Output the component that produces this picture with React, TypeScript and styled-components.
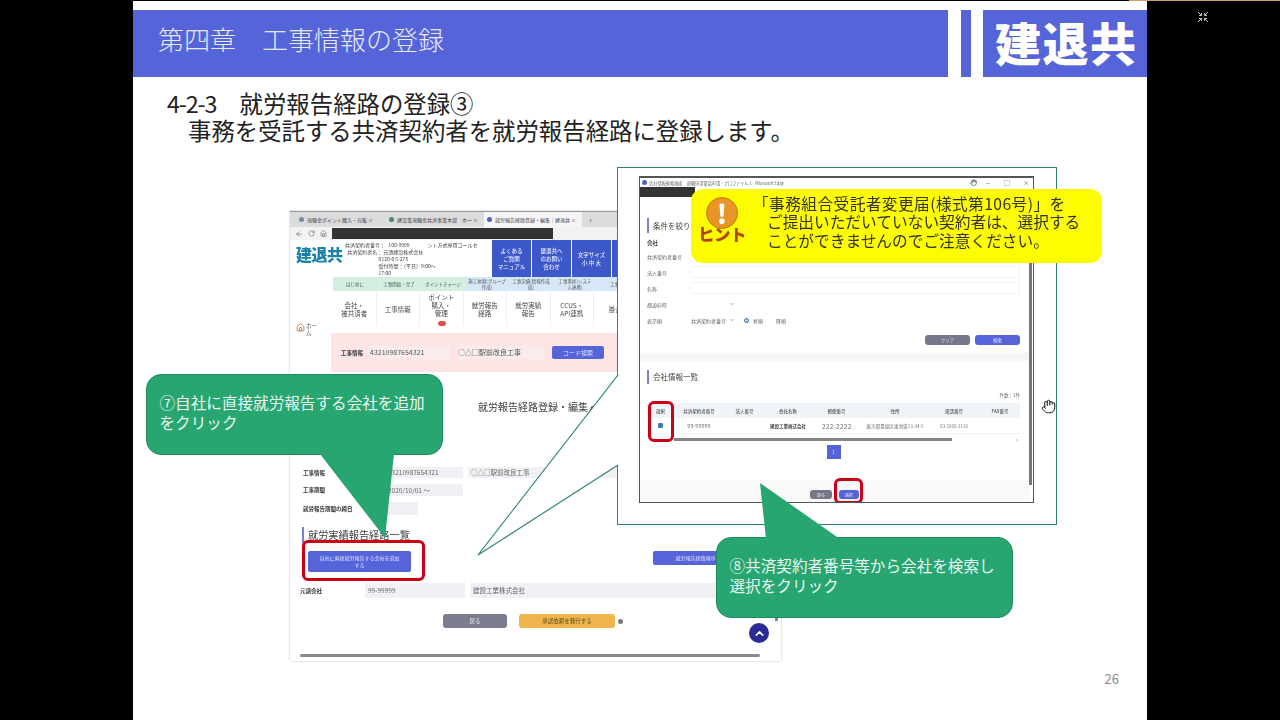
import styled, { createGlobalStyle } from "styled-components";
import { ArrowLeft, ChevronDown, ChevronUp, Hand, Home, RotateCw } from "lucide-react";

const FONT = `"Noto Sans CJK JP", "Noto Sans", sans-serif`;
const BLUE = "#5565d9";
const GREEN = "#27a671";
const LINE = "#2f8573";

const Global = createGlobalStyle`
  * { box-sizing: border-box; }
  html, body { margin: 0; padding: 0; background: #000; }
  body { font-family: ${FONT}; }
`;

const Page = styled.div`
  position: relative;
  width: 1280px;
  height: 720px;
  overflow: hidden;
  background: #000;
  padding: 1px 0 0 133px;
`;

const TopEdge = styled.div`
  position: absolute;
  top: 0;
  right: 0;
  width: 151px;
  height: 1px;
  background: #c8a168;
`;

const ExitIcon = styled.svg`
  position: absolute;
  left: 1197px;
  top: 11px;
  width: 12px;
  height: 12px;
`;

const Slide = styled.div`
  position: relative;
  width: 1014px;
  height: 719px;
  background: #fff;
  padding-top: 9px;
`;

const Header = styled.header`
  display: flex;
  height: 67px;
`;

const TitleBar = styled.div`
  width: 815px;
  display: flex;
  align-items: center;
  padding: 0 0 10px 25px;
  background: ${BLUE};
  color: #e6e9fb;
  font-size: 26px;
  font-weight: 300;
  white-space: pre;
`;

const Stripe = styled.div`
  width: 10px;
  margin-left: 13px;
  background: ${BLUE};
`;

const LogoBar = styled.div`
  flex: 1;
  margin-left: 12px;
  display: flex;
  align-items: center;
  padding: 0 0 5px 12px;
  background: ${BLUE};
  color: #fff;
  font-size: 46px;
  font-weight: 900;
  line-height: 1;
  letter-spacing: 1.5px;
`;

const Heading = styled.div`
  margin: 13px 0 0 34px;
  color: #222;
  font-size: 23.4px;
  line-height: 27px;
  white-space: pre;
`;

const HeadNum = styled.span`
  letter-spacing: -1.2px;
`;

const HeadingSub = styled.div`
  padding-left: 21px;
`;

/* --- background screenshot --- */

const Shot = styled.div`
  position: absolute;
  left: 157px;
  top: 210px;
  width: 491px;
  height: 450px;
  background: #fff;
  box-shadow: 0 0 2px #bbb;
  overflow: hidden;
  color: #444;
  filter: blur(0.4px);
`;

const TabStrip = styled.div`
  display: flex;
  align-items: center;
  height: 16px;
  padding-left: 6px;
  gap: 6px;
  background: #dcdcdc;
  font-size: 5px;
  white-space: nowrap;
  border-top: 1px solid #999;
`;

const Tab = styled.div<{ $active?: boolean; $w: number }>`
  width: ${(p) => p.$w}px;
  height: 100%;
  display: flex;
  align-items: center;
  gap: 3px;
  padding: 0 3px;
  background: ${(p) => (p.$active ? "#f5f5f5" : "transparent")};
`;

const Favicon = styled.span<{ $c: string }>`
  flex: none;
  width: 5px;
  height: 5px;
  border-radius: 50%;
  background: ${(p) => p.$c};
`;

const AddressRow = styled.div`
  display: flex;
  align-items: center;
  height: 13px;
  padding-left: 5px;
  gap: 5px;
  color: #666;
  background: #f2f2f2;
`;

const AddressMask = styled.div`
  width: 221px;
  height: 11px;
  background: #333;
`;

const SiteHeader = styled.div`
  display: flex;
  height: 37px;
`;

const SiteLogo = styled.div`
  width: 55px;
  padding: 2px 0 0 6px;
  color: #1b81a6;
  font-size: 16px;
  line-height: 24px;
  font-weight: 900;
  letter-spacing: -0.5px;
  white-space: nowrap;
`;

const SiteInfo = styled.div`
  width: 147px;
  padding-top: 1px;
  font-size: 5px;
  line-height: 7px;
  white-space: pre;
`;

const SiteButton = styled.div<{ $w: number }>`
  width: ${(p) => p.$w}px;
  margin-right: 1px;
  display: flex;
  align-items: center;
  justify-content: center;
  text-align: center;
  padding: 1px;
  background: #3d58c9;
  color: #e9ecff;
  font-size: 5.5px;
  line-height: 8px;
  font-weight: 500;
`;

const TopGrid = styled.div`
  display: grid;
  grid-template-columns: 41px 1fr;
  height: 95px;
`;

const Sidebar = styled.div`
  display: flex;
  align-items: flex-start;
  gap: 1px;
  padding: 46px 0 0 6px;
  color: #555;
  font-size: 5.5px;
  line-height: 7px;
`;

const SubNav = styled.div`
  display: flex;
  height: 14px;
  margin-left: 2px;
`;

const SubNavItem = styled.div<{ $c: string }>`
  flex: none;
  width: 44px;
  display: flex;
  align-items: center;
  justify-content: center;
  text-align: center;
  background: ${(p) => p.$c};
  color: #555;
  font-size: 4.5px;
  line-height: 6px;
  white-space: pre;
`;

const Menu = styled.div`
  display: flex;
  height: 34px;
  margin: 1px 0 0 2px;
`;

const MenuItem = styled.div`
  position: relative;
  flex: none;
  width: 43.5px;
  display: flex;
  align-items: center;
  justify-content: center;
  text-align: center;
  border-right: 1px solid #eee;
  color: #444;
  font-size: 6.5px;
  line-height: 8px;
  white-space: pre;
`;

const Badge = styled.span`
  position: absolute;
  left: 18px;
  bottom: 0;
  width: 8px;
  height: 5px;
  border-radius: 3px;
  background: #e05050;
`;

const PinkBand = styled.div`
  display: flex;
  align-items: center;
  height: 39px;
  margin-top: 7px;
  padding-left: 10px;
  background: #fde5e6;
  color: #555;
  font-size: 7px;
  white-space: nowrap;
`;

const PinkLabel = styled.span`
  width: 29px;
  font-size: 5.5px;
  font-weight: 700;
  color: #333;
`;

const PinkValue = styled.span<{ $w: number }>`
  width: ${(p) => p.$w}px;
  height: 13px;
  line-height: 13px;
  margin-right: 8px;
  background: #f8ecec;
`;

const BlueButton = styled.div<{ $w: number; $h: number; $r?: number; $size?: number }>`
  flex: none;
  width: ${(p) => p.$w}px;
  height: ${(p) => p.$h}px;
  border-radius: ${(p) => p.$r ?? 2}px;
  display: flex;
  align-items: center;
  justify-content: center;
  text-align: center;
  background: ${BLUE};
  color: #dfe3ff;
  font-size: ${(p) => p.$size ?? 5}px;
  line-height: 1.3;
`;

const ShotTitle = styled.div`
  margin-top: 28px;
  height: 14px;
  padding-left: 188px;
  color: #444;
  font-size: 10px;
  line-height: 14px;
  white-space: nowrap;
`;

const HelpGlyph = styled.span`
  font-size: 6px;
`;

const FieldList = styled.div`
  margin-top: 53px;
  display: flex;
  flex-direction: column;
  gap: 6px;
  padding-left: 13px;
`;

const FieldRow = styled.div`
  display: flex;
  align-items: center;
  gap: 5px;
`;

const FieldLabel = styled.div<{ $w?: number }>`
  flex: none;
  width: ${(p) => p.$w ?? 77}px;
  color: #333;
  font-size: 5.5px;
  font-weight: 700;
  white-space: nowrap;
`;

const FieldBox = styled.div<{ $w: number; $h: number }>`
  flex: none;
  width: ${(p) => p.$w}px;
  height: ${(p) => p.$h}px;
  padding-left: 3px;
  line-height: ${(p) => p.$h}px;
  background: #eff1f5;
  color: #666;
  font-size: 6.5px;
  white-space: nowrap;
`;

const SectionTitle = styled.div<{ $mt: number; $size: number; $h: number }>`
  margin-top: ${(p) => p.$mt}px;
  height: ${(p) => p.$h}px;
  line-height: ${(p) => p.$h}px;
  padding-left: 4px;
  border-left: 2px solid #7a80d0;
  color: #444;
  font-size: ${(p) => p.$size}px;
  white-space: nowrap;
`;

const ShotSection = styled.div`
  margin-left: 12px;
`;

const ActionRow = styled.div`
  display: flex;
  justify-content: space-between;
  align-items: flex-start;
  height: 21px;
  margin-top: 8px;
  padding-left: 18px;
`;

const ActionRight = styled.div`
  width: 128px;
`;

const ContractorRow = styled.div`
  display: flex;
  align-items: center;
  gap: 5px;
  margin-top: 11px;
  padding-left: 10px;
`;

const BottomRow = styled.div`
  display: flex;
  align-items: center;
  height: 14px;
  margin-top: 16px;
  padding-left: 153px;
  gap: 12px;
`;

const PlainButton = styled.div<{ $bg: string; $fg: string; $w: number; $h: number; $size?: number }>`
  flex: none;
  width: ${(p) => p.$w}px;
  height: ${(p) => p.$h}px;
  border-radius: 3px;
  display: flex;
  align-items: center;
  justify-content: center;
  background: ${(p) => p.$bg};
  color: ${(p) => p.$fg};
  font-size: ${(p) => p.$size ?? 5.5}px;
`;

const HelpDot = styled.span`
  width: 5px;
  height: 5px;
  margin-left: -9px;
  border-radius: 50%;
  background: #777;
`;

const ScrollRow = styled.div`
  display: flex;
  align-items: center;
  margin-top: 25px;
  height: 4px;
  padding: 0 21px 0 10px;
`;

const ScrollThumb = styled.div`
  flex: 1;
  height: 3px;
  border-radius: 2px;
  background: #8a8a8a;
`;

const ToTop = styled.div`
  position: absolute;
  left: 459px;
  top: 412px;
  width: 20px;
  height: 20px;
  border-radius: 50%;
  display: flex;
  align-items: center;
  justify-content: center;
  background: #2b2a96;
  color: #fff;
`;

const ScrollNub = styled.div`
  position: absolute;
  left: 485px;
  top: 403px;
  width: 3px;
  height: 7px;
  background: #888;
`;

const RedBox = styled.div<{ $x: number; $y: number; $w: number; $h: number; $b: number }>`
  position: absolute;
  left: ${(p) => p.$x}px;
  top: ${(p) => p.$y}px;
  width: ${(p) => p.$w}px;
  height: ${(p) => p.$h}px;
  border: ${(p) => p.$b}px solid #c90016;
  border-radius: 6px;
`;

/* --- enlarged popup --- */

const Frame = styled.div`
  position: absolute;
  left: 484px;
  top: 166px;
  width: 440px;
  height: 358px;
  padding: 8px 22px 0 21px;
  background: #fff;
  border: 1.5px solid ${LINE};
`;

const Win = styled.div`
  position: relative;
  width: 395px;
  height: 327px;
  display: flex;
  flex-direction: column;
  overflow: hidden;
  border: 1px solid #555;
  border-top-width: 2px;
  background: #fff;
  color: #555;
  filter: blur(0.35px);
`;

const WinTitle = styled.div`
  display: flex;
  align-items: center;
  gap: 2px;
  height: 9px;
  padding: 0 4px 0 2px;
  color: #666;
  font-size: 4.2px;
  white-space: nowrap;
`;

const WinControls = styled.div`
  margin-left: auto;
  display: flex;
  align-items: center;
  gap: 13px;
  font-size: 6px;
  color: #666;
`;

const DarkBar = styled.div`
  flex: none;
  width: 55px;
  height: 10px;
  background: #333;
`;

const WinBody = styled.div`
  flex: 1;
  display: flex;
`;

const WinContent = styled.div`
  flex: 1;
  padding: 0 9px 0 7px;
`;

const WinScroll = styled.div`
  flex: none;
  width: 3px;
  height: 288px;
  margin-right: 2px;
  background: #777;
`;

const GroupLabel = styled.div`
  margin-top: 6px;
  height: 9px;
  line-height: 9px;
  color: #444;
  font-size: 5.5px;
  font-weight: 700;
`;

const SearchRows = styled.div`
  margin-top: 2px;
  display: flex;
  flex-direction: column;
  gap: 4px;
`;

const SearchRow = styled.div`
  display: flex;
  align-items: center;
  height: 12px;
  color: #666;
  font-size: 5px;
`;

const SearchLabel = styled.div`
  width: 42px;
  white-space: nowrap;
`;

const SearchInput = styled.div`
  flex: 1;
  height: 12px;
  border: 1px solid #f5f5f5;
  border-radius: 2px;
`;

const SelectBox = styled.div`
  width: 46px;
  height: 12px;
  display: flex;
  align-items: center;
  justify-content: flex-end;
  gap: 3px;
  white-space: nowrap;
`;

const Radio = styled.span`
  width: 5px;
  height: 5px;
  margin: 0 4px 0 9px;
  border-radius: 50%;
  border: 1.5px solid #2c6fb5;
  background: #bcd6ee;
`;

const RadioText = styled.span`
  width: 23px;
`;

const SearchActions = styled.div`
  margin-top: 9px;
  display: flex;
  justify-content: flex-end;
  gap: 5px;
`;

const GreyBand = styled.div`
  height: 10px;
  margin: 7px -9px 0 -7px;
  background: linear-gradient(#fafafa, #f3f3f3, #fbfbfb);
`;

const CountLine = styled.div`
  margin-top: 7px;
  height: 8px;
  line-height: 8px;
  text-align: right;
  color: #666;
  font-size: 4.5px;
`;

const Table = styled.div`
  margin-top: 4px;
  display: grid;
  grid-template-columns: 27px 50px 41px 46px 51px 66px 52px 40px;
`;

const Th = styled.div`
  height: 15px;
  display: flex;
  align-items: center;
  justify-content: center;
  background: #f0f3f8;
  color: #555;
  font-size: 4.5px;
  font-weight: 500;
`;

const Td = styled.div<{ $size?: number; $strong?: boolean }>`
  height: 16px;
  display: flex;
  align-items: center;
  justify-content: center;
  color: ${(p) => (p.$strong ? "#444" : "#777")};
  font-size: ${(p) => p.$size ?? 4.5}px;
  font-weight: ${(p) => (p.$strong ? 700 : 400)};
  white-space: nowrap;
  border-bottom: 1px solid #f4f4f4;
`;

const Check = styled.span`
  width: 5px;
  height: 5px;
  border-radius: 1px;
  background: #3c79a8;
`;

const TableScroll = styled.div`
  display: flex;
  align-items: center;
  height: 3px;
  margin-top: 4px;
  padding-left: 27px;
`;

const TableThumb = styled.div`
  width: 278px;
  height: 3px;
  background: #858585;
`;

const TableArrow = styled.span`
  margin-left: 64px;
  color: #666;
  font-size: 6px;
`;

const Pager = styled.div`
  margin-top: 4px;
  display: flex;
  justify-content: center;
`;

const WinFooter = styled.div`
  height: 23px;
  margin: 21px -9px 0 -7px;
  padding-top: 10px;
  display: flex;
  justify-content: center;
  gap: 7px;
  background: #f9f9f9;
`;

/* --- slide objects --- */

const Wedge = styled.svg`
  position: absolute;
  left: 344px;
  top: 374px;
  width: 143px;
  height: 182px;
`;

const Callout = styled.div<{ $x: number; $y: number }>`
  position: absolute;
  left: ${(p) => p.$x}px;
  top: ${(p) => p.$y}px;
  width: 297px;
  height: 81px;
  padding: 18px 12.5px 0;
  border-radius: 15px;
  border: 1px solid #208a5f;
  background: ${GREEN};
  color: #eaf7f1;
  font-size: 15.6px;
  line-height: 19.5px;
  white-space: nowrap;
`;

const Tail = styled.svg<{ $x: number; $y: number; $w: number; $h: number }>`
  position: absolute;
  left: ${(p) => p.$x}px;
  top: ${(p) => p.$y}px;
  width: ${(p) => p.$w}px;
  height: ${(p) => p.$h}px;
  overflow: visible;
`;

const Hint = styled.div`
  position: absolute;
  left: 558px;
  top: 188px;
  width: 411px;
  height: 74px;
  display: flex;
  border-radius: 12px;
  background: #fdfd00;
`;

const HintMark = styled.div`
  flex: none;
  width: 62px;
  display: flex;
  flex-direction: column;
  align-items: center;
  padding-top: 8px;
`;

const HintCircle = styled.div`
  width: 32px;
  height: 32px;
  border-radius: 50%;
  display: flex;
  align-items: center;
  justify-content: center;
  background: #e69526;
  border: 1px solid #c97a12;
  color: #fff;
  font-size: 26px;
  font-weight: 900;
  line-height: 1;
`;

const HintWord = styled.div`
  margin-top: -5px;
  color: #b4440d;
  font-size: 16.5px;
  font-weight: 900;
  line-height: 20px;
  letter-spacing: -0.5px;
  white-space: nowrap;
`;

const HintText = styled.div`
  padding-top: 5.5px;
  color: #333;
  font-size: 15.7px;
  line-height: 18.7px;
  white-space: nowrap;
`;

const HintLine = styled.div<{ $pad?: number; $track?: number }>`
  padding-left: ${(p) => p.$pad ?? 0}px;
  letter-spacing: ${(p) => p.$track ?? 0}px;
`;

const Cursor = styled.div`
  position: absolute;
  left: 908px;
  top: 398px;
  line-height: 0;
`;

const WinCursor = styled.span`
  line-height: 0;
  margin-right: -5px;
`;

const PageNo = styled.div`
  position: absolute;
  right: 28px;
  bottom: 32px;
  color: #8a8a8a;
  font-size: 13px;
`;

const subGreen = ["はじめに", "工事開始・完了", "ポイントチャージ"];
const subBlue = ["施工体制(グループ\n作成)", "工事実績(情報作成\n成)", "工事進捗(システ\nム連携)", "工事進捗"];
const menu = ["会社・\n被共済者", "工事情報", "ポイント\n購入・\n管理\n ", "就労報告\n経路", "就労実績\n報告", "CCUS・\nAPI連携", "掛金"];
const searchLabels = ["法人番号", "名称"];
const tableHead = ["選択", "共済契約者番号", "法人番号", "会社名称", "郵便番号", "住所", "電話番号", "FAX番号"];

export default function App() {
  return (
    <Page>
      <Global />
      <TopEdge />
      <ExitIcon viewBox="0 0 12 12" fill="none" stroke="#bdbdbd" strokeWidth="1">
        <path d="M1 1l3.5 3.5M4.5 2v2.5H2M11 1L7.5 4.5M7.5 2v2.5H10M1 11l3.5-3.5M4.5 10V7.5H2M11 11L7.5 7.5M7.5 10V7.5H10" />
      </ExitIcon>
      <Slide>
        <Header>
          <TitleBar>第四章　工事情報の登録</TitleBar>
          <Stripe />
          <LogoBar>建退共</LogoBar>
        </Header>
        <Heading>
          <HeadNum>4-2-3</HeadNum>　就労報告経路の登録③
          <HeadingSub>事務を受託する共済契約者を就労報告経路に登録します。</HeadingSub>
        </Heading>

        <Shot>
          <TabStrip>
            <Tab $w={84}>
              <Favicon $c="#7a8aa0" />
              退職金ポイント購入・充販 ×
            </Tab>
            <Tab $w={92}>
              <Favicon $c="#4a8a70" />
              建設業退職金共済事業本部　ホー ×
            </Tab>
            <Tab $active $w={98}>
              <Favicon $c="#5060c0" />
              就労報告経路登録・編集｜建退共 ×
            </Tab>
            <span>＋</span>
          </TabStrip>
          <AddressRow>
            <ArrowLeft size={8} />
            <RotateCw size={7} />
            <Home size={7} />
            <AddressMask />
          </AddressRow>
          <SiteHeader>
            <SiteLogo>建退共</SiteLogo>
            <SiteInfo>
              {"共済契約者番号：   100-9999                ント方式専用コールセ\n"}
              {"  共済契約者名： 元請建設株式会社\n"}
              {"                              0120-0 5-275\n"}
              {"                              受付時間：（平日）9:00～\n"}
              {"                              17:00"}
            </SiteInfo>
            <SiteButton $w={39}>よくある<br />ご質問<br />マニュアル</SiteButton>
            <SiteButton $w={39}>建退共へ<br />のお問い<br />合わせ</SiteButton>
            <SiteButton $w={39}>文字サイズ<br />小 中 大</SiteButton>
            <SiteButton $w={39} />
          </SiteHeader>
          <TopGrid>
            <Sidebar>
              <Home size={9} color="#a06a3a" />
              <span>ホー<br />ム</span>
            </Sidebar>
            <div>
              <SubNav>
                {subGreen.map((s) => <SubNavItem key={s} $c="#d2efdf">{s}</SubNavItem>)}
                {subBlue.map((s) => <SubNavItem key={s} $c="#d6e8f7">{s}</SubNavItem>)}
              </SubNav>
              <Menu>
                {menu.map((m, i) => (
                  <MenuItem key={m}>
                    {m}
                    {i === 2 && <Badge />}
                  </MenuItem>
                ))}
              </Menu>
              <PinkBand>
                <PinkLabel>工事情報</PinkLabel>
                <PinkValue $w={80}>43210987654321</PinkValue>
                <PinkValue $w={86}>○△□駅前改良工事</PinkValue>
                <BlueButton $w={52} $h={13} $size={6}>コード検索</BlueButton>
              </PinkBand>
            </div>
          </TopGrid>
          <ShotTitle>就労報告経路登録・編集 <HelpGlyph>●</HelpGlyph></ShotTitle>
          <FieldList>
            <FieldRow>
              <FieldLabel>工事情報</FieldLabel>
              <FieldBox $w={78} $h={11}>43210987654321</FieldBox>
              <FieldBox $w={300} $h={11}>○△□駅前改良工事</FieldBox>
            </FieldRow>
            <FieldRow>
              <FieldLabel>工事期間</FieldLabel>
              <FieldBox $w={78} $h={12}>2020/10/01 ～</FieldBox>
            </FieldRow>
            <FieldRow>
              <FieldLabel>就労報告期間の締日</FieldLabel>
              <FieldBox $w={33} $h={13} />
            </FieldRow>
          </FieldList>
          <ShotSection>
            <SectionTitle $mt={12} $size={10.2} $h={16}>就労実績報告経路一覧</SectionTitle>
          </ShotSection>
          <ActionRow>
            <BlueButton $w={103} $h={21}>自社に直接就労報告する会社を追加<br />する</BlueButton>
            <ActionRight>
              <BlueButton $w={110} $h={14}>就労報告経路順序を変更する</BlueButton>
            </ActionRight>
          </ActionRow>
          <ContractorRow>
            <FieldLabel $w={60}>元請会社</FieldLabel>
            <FieldBox $w={100} $h={15}>99-99999</FieldBox>
            <FieldBox $w={290} $h={15}>建設工業株式会社</FieldBox>
          </ContractorRow>
          <BottomRow>
            <PlainButton $bg="#7c7c90" $fg="#eee" $w={64} $h={14}>戻る</PlainButton>
            <PlainButton $bg="#eeb64c" $fg="#5a4a20" $w={96} $h={14}>承認依頼を発行する</PlainButton>
            <HelpDot />
          </BottomRow>
          <ScrollRow>
            <ScrollThumb />
          </ScrollRow>
          <ToTop><ChevronUp size={13} strokeWidth={3} /></ToTop>
          <ScrollNub />
          <RedBox $x={12} $y={329} $w={123} $h={41} $b={3.5} />
        </Shot>

        <Frame>
          <Win>
            <WinTitle>
              <Favicon $c="#5060c0" />
              会社情報検索画面　退職申請電話申請 - プロファイル 1 - Microsoft Edge
              <WinControls>
                <WinCursor><Hand size={7} color="#333" /></WinCursor>
                <span>－</span>
                <span>□</span>
                <span>×</span>
              </WinControls>
            </WinTitle>
            <DarkBar />
            <WinBody>
              <WinContent>
                <SectionTitle $mt={21} $size={7.5} $h={15}>条件を絞り込む</SectionTitle>
                <GroupLabel>会社</GroupLabel>
                <SearchRows>
                  <SearchRow>
                    <SearchLabel>共済契約者番号</SearchLabel>
                    <SearchInput />
                  </SearchRow>
                  {searchLabels.map((l) => (
                    <SearchRow key={l}>
                      <SearchLabel>{l}</SearchLabel>
                      <SearchInput />
                    </SearchRow>
                  ))}
                  <SearchRow>
                    <SearchLabel>都道府県</SearchLabel>
                    <SelectBox><ChevronDown size={6} /></SelectBox>
                  </SearchRow>
                  <SearchRow>
                    <SearchLabel>表示順</SearchLabel>
                    <SelectBox>共済契約者番号<ChevronDown size={6} /></SelectBox>
                    <Radio />
                    <RadioText>昇順</RadioText>
                    <span>降順</span>
                  </SearchRow>
                </SearchRows>
                <SearchActions>
                  <PlainButton $bg="#77778a" $fg="#ddd" $w={45} $h={10} $size={4.5}>クリア</PlainButton>
                  <PlainButton $bg={BLUE} $fg="#dfe3ff" $w={45} $h={10} $size={4.5}>検索</PlainButton>
                </SearchActions>
                <GreyBand />
                <SectionTitle $mt={8} $size={7.5} $h={14}>会社情報一覧</SectionTitle>
                <CountLine>件数：1件</CountLine>
                <Table>
                  {tableHead.map((h) => <Th key={h}>{h}</Th>)}
                  <Td><Check /></Td>
                  <Td $size={5.5}>99-99999</Td>
                  <Td />
                  <Td $strong>建設工業株式会社</Td>
                  <Td $size={7}>222-2222</Td>
                  <Td $size={4.6}>東京都豊島区東池袋13-34-5</Td>
                  <Td>03-3260-2116</Td>
                  <Td />
                </Table>
                <TableScroll>
                  <TableThumb />
                  <TableArrow>›</TableArrow>
                </TableScroll>
                <Pager>
                  <BlueButton $w={14} $h={14} $r={0} $size={5}>1</BlueButton>
                </Pager>
                <WinFooter>
                  <PlainButton $bg="#77778a" $fg="#eee" $w={22} $h={9} $size={4}>戻る</PlainButton>
                  <PlainButton $bg={BLUE} $fg="#eee" $w={20} $h={9} $size={4}>選択</PlainButton>
                </WinFooter>
              </WinContent>
              <WinScroll />
            </WinBody>
            <RedBox $x={8} $y={223} $w={26} $h={41} $b={3} />
            <RedBox $x={194} $y={300} $w={29} $h={26} $b={3} />
          </Win>
        </Frame>

        <Wedge viewBox="0 0 143 182">
          <polygon points="141,0 141,90 1,180" fill="#fff" />
          <path d="M141 0L1 180L141 90" fill="none" stroke={LINE} strokeWidth="1.2" />
        </Wedge>

        <Callout $x={13} $y={373}>
          ⑦自社に直接就労報告する会社を追加
          <br />
          をクリック
          <Tail $x={173} $y={79} $w={74} $h={84} viewBox="0 0 74 84">
            <polygon points="0,0 74,0 65,84" fill={GREEN} />
          </Tail>
        </Callout>

        <Callout $x={583} $y={536}>
          ⑧共済契約者番号等から会社を検索し
          <br />
          選択をクリック
          <Tail $x={43} $y={-55} $w={80} $h={56} viewBox="0 0 80 56">
            <polygon points="0,0 6,56 80,56" fill={GREEN} />
          </Tail>
        </Callout>

        <Hint>
          <HintMark>
            <HintCircle>!</HintCircle>
            <HintWord>ヒント</HintWord>
          </HintMark>
          <HintText>
            <HintLine $track={0.42}>「事務組合受託者変更届(様式第106号)」を</HintLine>
            <HintLine $pad={14}>ご提出いただいていない契約者は、選択する</HintLine>
            <HintLine $pad={14}>ことができませんのでご注意ください。</HintLine>
          </HintText>
        </Hint>

        <Cursor><Hand size={15} color="#111" fill="#fff" strokeWidth={1.6} /></Cursor>
        <PageNo>26</PageNo>
      </Slide>
    </Page>
  );
}
